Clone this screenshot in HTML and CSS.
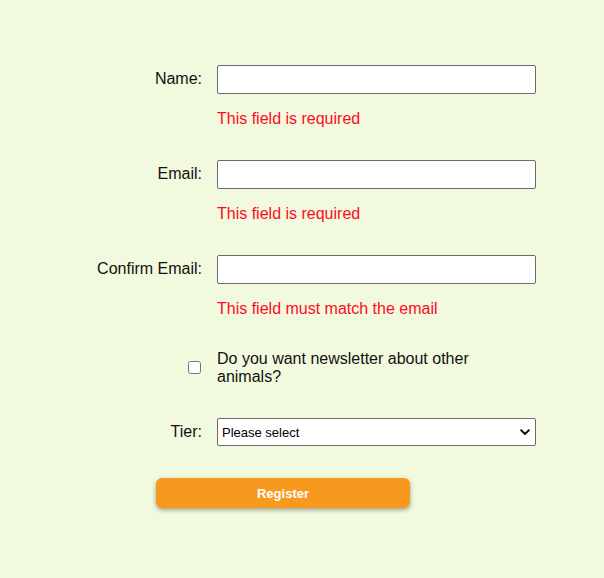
FILE: index.html
```html
<!DOCTYPE html>
<html lang="en">
<head>
<meta charset="utf-8">
<title>Register</title>
<link rel="stylesheet" href="styles.css">
</head>
<body>
<form class="form" novalidate>
  <div class="row">
    <label class="label" for="name">Name:</label>
    <div class="field">
      <input class="input" id="name" type="text">
      <p class="error">This field is required</p>
    </div>
  </div>
  <div class="row">
    <label class="label" for="email">Email:</label>
    <div class="field">
      <input class="input" id="email" type="email">
      <p class="error">This field is required</p>
    </div>
  </div>
  <div class="row">
    <label class="label" for="confirm">Confirm Email:</label>
    <div class="field">
      <input class="input" id="confirm" type="email">
      <p class="error">This field must match the email</p>
    </div>
  </div>
  <div class="row row-check">
    <div class="check-cell"><input class="check" id="news" type="checkbox"></div>
    <label class="check-text" for="news">Do you want newsletter about other animals?</label>
  </div>
  <div class="row">
    <label class="label" for="tier">Tier:</label>
    <div class="select-wrap">
      <select class="select" id="tier">
        <option>Please select</option>
        <option>Bronze</option>
        <option>Silver</option>
        <option>Gold</option>
      </select>
      <svg class="chevron" width="10" height="7" viewBox="0 0 10 7" aria-hidden="true"><path d="M1.2 1.3 L5 5 L8.8 1.3" fill="none" stroke="#111" stroke-width="2" stroke-linecap="round" stroke-linejoin="round"/></svg>
    </div>
  </div>
  <div class="actions">
    <button class="button" type="submit">Register</button>
  </div>
</form>
</body>
</html>
```
FILE: styles.css
```css
html, body {
  margin: 0;
  padding: 0;
}
body {
  background: #f1f9de;
  font-family: "Liberation Sans", Arial, Helvetica, sans-serif;
  font-size: 16px;
  color: #111;
  min-height: 578px;
}
.form {
  padding-top: 65px;
  display: flex;
  flex-direction: column;
}
.row {
  display: grid;
  grid-template-columns: 202px 319px;
  column-gap: 15px;
  align-items: start;
  margin-bottom: 32.5px;
}
.label {
  text-align: right;
  line-height: 27px;
}
.field {
  display: flex;
  flex-direction: column;
}
.input {
  box-sizing: border-box;
  width: 319px;
  height: 29px;
  margin: 0;
  border: 1px solid #6b6b6b;
  border-radius: 2px;
  background: #fff;
  font: inherit;
  padding: 0 6px;
}
.error {
  margin: 15.5px 0 0;
  line-height: 18px;
  color: #ff0a1e;
}
.row-check {
  align-items: center;
  margin-top: -0.5px;
}
.check-cell {
  display: flex;
  justify-content: flex-end;
}
.check {
  width: 13px;
  height: 13px;
  margin: 0 1px 0 0;
}
.check-text {
  line-height: 18px;
  width: 300px;
}
.select-wrap {
  position: relative;
  width: 319px;
  height: 28px;
}
.select {
  box-sizing: border-box;
  width: 319px;
  height: 28px;
  margin: 0;
  -webkit-appearance: none;
  appearance: none;
  border: 1px solid #6b6b6b;
  border-radius: 2px;
  background: #fff;
  font-family: "Liberation Sans", Arial, sans-serif;
  font-size: 13px;
  color: #000;
  padding: 0 4px;
}
.chevron {
  position: absolute;
  right: 6px;
  top: 11px;
}
.actions {
  padding-left: 156px;
  margin-top: -0.5px;
}
.button {
  width: 254px;
  height: 30px;
  border: none;
  border-radius: 6px;
  background: #f8991f;
  color: #fff;
  font-family: "Liberation Sans", Arial, sans-serif;
  font-size: 13px;
  font-weight: bold;
  box-shadow: 0 2px 4px rgba(60, 60, 40, 0.45);
  cursor: pointer;
}
```
